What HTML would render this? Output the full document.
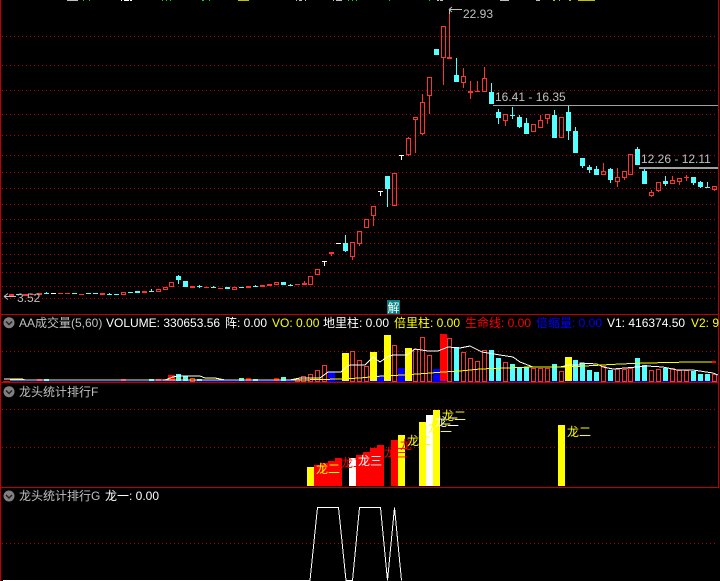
<!DOCTYPE html>
<html><head><meta charset="utf-8"><style>
html,body{margin:0;padding:0;background:#000;width:720px;height:581px;overflow:hidden}
svg{display:block}
text{font-family:"Liberation Sans","Noto Sans CJK SC",sans-serif;font-size:12px;white-space:pre}
</style></head><body>
<svg width="720" height="581" viewBox="0 0 720 581" xmlns="http://www.w3.org/2000/svg" shape-rendering="crispEdges">
<rect width="720" height="581" fill="#000"/>
<!-- top clipped text -->
<path fill="#c0c0c0" d="M67 0h11v1H67zM296 0h1v1h-1zM299 0h3v1h-3zM305 0h1v1h-1zM333 0h1v1h-1zM336 0h6v1h-6zM437 0h2v1h-2zM440 0h3v1h-3zM500 0h9v1h-9zM536 0h4v1h-4z"/>
<path fill="#fff" d="M121 0h1v1h-1zM124 0h5v1h-5zM130 0h2v1h-2z"/>
<path fill="#00e000" d="M83 0h1v1h-1zM89 0h1v1h-1zM162 0h1v1h-1zM166 0h1v1h-1zM170 0h1v1h-1zM202 0h2v1h-2zM209 0h1v1h-1zM348 0h1v1h-1zM352 0h1v1h-1zM356 0h1v1h-1zM389 0h1v1h-1zM429 0h1v1h-1z"/>
<path fill="#c0c000" d="M238 0h11v1h-11zM553 0h2v1h-2zM559 0h1v1h-1zM569 0h2v1h-2zM578 0h17v1h-17z"/>
<!-- grid -->
<g stroke="#b00000" stroke-width="1" stroke-dasharray="1 3" fill="none">
<path d="M2 36.500H718M2 65.500H718M2 90.500H718M2 114.500H718M2 135.500H718M2 155.500H718M2 172.500H718M2 188.500H718M2 204.500H718M2 219.500H718M2 232.500H718M2 243.500H718M2 254.500H718M2 263.500H718M2 272.500H718M2 286.500H718M2 298.500H718M2 351.500H718M2 409.500H718M2 447.500H718M2 543.500H718"/>
</g>
<!-- frame -->
<path fill="#c00000" d="M0 0h1v581H0zM718 0h1v488h-1zM1 314h718v1H1zM1 382h718v1H1zM1 487h718v1H1z"/>
<!-- level lines -->
<path fill="#a0a0a0" d="M493 105h225v1H493zM639 167h79v2H639z"/>
<!-- candle wicks red -->
<path fill="none" stroke="#ff3232" d="M304.500 281V285M331.500 252V256M449.500 10V59M470.500 81V99M477.500 81V92M686.500 175V181M352.500 256V260M359.500 244V246M373.500 215V226M408.500 137V138M408.500 155V156M415.500 120V153M422.500 94V102M422.500 134V135M429.500 96V114M443.500 58V85M463.500 68V76M463.500 83V88M484.500 67V78M505.500 121V126M540.500 115V120M547.500 119V124M603.500 163V171M617.500 168V177M617.500 182V187M624.500 178V180M651.500 190V192M651.500 196V197M658.500 191V192M672.500 176V180M679.500 182V185M714.500 190V191"/>
<!-- candle bodies red filled -->
<path fill="#ff3232" d="M9 294h5v2H9zM23 294h5v2h-5zM30 294h5v1h-5zM37 293h5v2h-5zM58 293h5v1h-5zM65 293h5v1h-5zM79 294h5v1h-5zM100 293h5v2h-5zM142 291h5v2h-5zM190 286h5v2h-5zM204 287h5v1h-5zM218 288h5v1h-5zM246 286h5v2h-5zM260 285h5v2h-5zM267 284h5v2h-5zM295 284h5v1h-5zM302 283h5v2h-5zM329 252h5v2h-5zM447 57h5v2h-5zM468 91h5v2h-5zM475 91h5v1h-5zM684 177h5v1h-5z"/>
<!-- candle bodies red hollow -->
<path fill="none" stroke="#ff3232" d="M121.500 292.500h4v2h-4zM156.500 289.500h4v2h-4zM163.500 287.500h4v2h-4zM169.500 282.500h4v4h-4zM232.500 287.500h4v2h-4zM274.500 282.500h4v2h-4zM308.500 276.500h4v8h-4zM315.500 269.500h4v5h-4zM350.500 242.500h4v14h-4zM357.500 231.500h4v12h-4zM364.500 219.500h4v8h-4zM371.500 206.500h4v9h-4zM392.500 173.500h4v32h-4zM406.500 138.500h4v16h-4zM413.500 117.500h4v2h-4zM420.500 102.500h4v31h-4zM427.500 77.500h4v18h-4zM441.500 26.500h4v31h-4zM461.500 76.500h4v6h-4zM482.500 78.500h4v13h-4zM503.500 114.500h4v6h-4zM531.500 124.500h4v7h-4zM538.500 120.500h4v7h-4zM545.500 114.500h4v4h-4zM559.500 117.500h4v20h-4zM601.500 171.500h4v3h-4zM615.500 177.500h4v4h-4zM622.500 171.500h4v6h-4zM628.500 154.500h4v20h-4zM649.500 192.500h4v3h-4zM656.500 182.500h4v8h-4zM670.500 180.500h4v3h-4zM677.500 178.500h4v3h-4zM712.500 186.500h4v3h-4z"/>
<!-- candle wicks cyan -->
<path fill="none" stroke="#54ffff" d="M46.500 292V294M109.500 293V295M151.500 289V292M178.500 275V284M199.500 285V288M213.500 286V288M255.500 285V287M290.500 284V286M345.500 235V252M387.500 189V207M456.500 58V75M491.500 83V92M498.500 109V124M512.500 107V119M519.500 115V128M526.500 118V123M554.500 110V115M568.500 106V140M575.500 127V131M582.500 166V168M589.500 165V173M596.500 166V169M610.500 168V183M637.500 147V149M644.500 169V171M665.500 176V186M693.500 183V185M700.500 181V188M707.500 182V188"/>
<!-- candle bodies cyan -->
<path fill="#54ffff" d="M16 294h5v1h-5zM44 293h5v1h-5zM72 293h5v1h-5zM86 293h5v1h-5zM93 293h5v1h-5zM107 294h5v1h-5zM114 294h5v1h-5zM128 292h5v1h-5zM135 291h5v2h-5zM149 291h5v1h-5zM176 276h5v4h-5zM183 281h5v6h-5zM197 286h5v1h-5zM211 287h5v1h-5zM225 287h5v2h-5zM239 287h5v1h-5zM253 286h5v1h-5zM281 282h5v3h-5zM288 285h5v1h-5zM343 243h5v8h-5zM385 176h5v13h-5zM434 49h5v6h-5zM454 75h5v7h-5zM489 92h5v12h-5zM496 112h5v6h-5zM510 115h5v1h-5zM517 117h5v10h-5zM524 123h5v11h-5zM552 115h5v23h-5zM566 112h5v19h-5zM573 131h5v22h-5zM580 158h5v8h-5zM587 167h5v3h-5zM594 169h5v6h-5zM608 169h5v11h-5zM635 149h5v16h-5zM642 171h5v13h-5zM663 181h5v3h-5zM691 177h5v6h-5zM698 182h5v5h-5zM705 187h5v1h-5z"/>
<!-- white dashes / T -->
<path fill="#fff" d="M51 293h5v1h-5zM336 243h5v1h-5zM322 261h5v1h-5zM324 261h1v5h-1zM378 191h5v1h-5zM380 191h1v5h-1zM399 155h5v1h-5zM401 155h1v5h-1z"/>
<!-- price labels -->
<path fill="none" stroke="#c0c0c0" shape-rendering="auto" d="M449 9.500H462M449.500 9V14M449 9.500L452 7M449 9.500L452 12" stroke-width="1"/>
<text x="463" y="18" fill="#c0c0c0">22.93</text>
<text x="495" y="101" fill="#c0c0c0">16.41 - 16.35</text>
<text x="641" y="163" fill="#c0c0c0">12.26 - 12.11</text>
<path fill="none" stroke="#c0c0c0" d="M4 296.500H16M4 296.500L8 293.500M4 296.500L8 299.500" shape-rendering="auto"/>
<text x="17" y="302" fill="#c0c0c0">3.52</text>
<rect x="387" y="300" width="13" height="14" fill="#008080"/>
<text x="387.500" y="312" fill="#fff">解</text>
<!-- volume: base -->
<path fill="#0000ff" d="M5 381h713v1H5zM285 379h16v2h-16zM168 380h130v1H168z"/>
<path fill="#ff0000" d="M3 381h7v1H3z"/>
<!-- volume bars filled -->
<path fill="#ffff00" d="M342 353h7v28h-7zM370 352h7v29h-7zM384 335h7v46h-7zM405 348h7v33h-7zM565 357h7v24h-7z"/>
<path fill="#0000ff" d="M328 372h7v9h-7zM377 375h7v6h-7zM398 368h7v13h-7zM433 369h7v12h-7z"/>
<path fill="#ff0000" d="M440 334h7v47h-7zM168 375h7v6h-7zM37 379h5v2h-5zM121 379h5v2h-5zM156 379h5v2h-5zM163 379h5v2h-5zM246 378h5v3h-5zM274 378h5v3h-5z"/>
<path fill="#54ffff" d="M176 374h5v7h-5zM183 376h5v5h-5zM44 379h5v2h-5zM149 379h5v2h-5zM197 379h5v2h-5zM239 378h5v3h-5zM253 379h5v2h-5zM281 377h5v4h-5zM454 347h5v34h-5zM489 350h5v31h-5zM496 358h5v23h-5zM510 364h5v17h-5zM517 367h5v14h-5zM524 367h5v14h-5zM552 364h5v17h-5zM573 360h5v21h-5zM580 363h5v18h-5zM587 370h5v11h-5zM594 372h5v9h-5zM608 370h5v11h-5zM635 358h5v23h-5zM642 365h5v16h-5zM663 368h5v13h-5zM691 371h5v10h-5zM698 374h5v7h-5zM705 374h5v7h-5z"/>
<!-- volume bars hollow -->
<path fill="none" stroke="#ff3232" d="M190.500 378.500h4v3h-4zM295.500 379.500h4v2h-4zM301.500 376.500h4v5h-4zM308.500 374.500h4v7h-4zM315.500 370.500h4v11h-4zM322.500 365.500h4v16h-4zM350.500 351.500h4v30h-4zM357.500 360.500h4v21h-4zM364.500 366.500h4v15h-4zM392.500 345.500h4v36h-4zM413.500 349.500h4v32h-4zM420.500 337.500h4v44h-4zM427.500 355.500h4v26h-4zM447.500 338.500h4v43h-4zM461.500 352.500h4v29h-4zM468.500 358.500h4v23h-4zM475.500 361.500h4v20h-4zM482.500 350.500h4v31h-4zM503.500 362.500h4v19h-4zM531.500 368.500h4v13h-4zM538.500 368.500h4v13h-4zM545.500 368.500h4v13h-4zM559.500 371.500h4v10h-4zM601.500 366.500h4v15h-4zM615.500 369.500h4v12h-4zM622.500 369.500h4v12h-4zM628.500 368.500h4v13h-4zM649.500 370.500h4v11h-4zM656.500 369.500h4v12h-4zM670.500 368.500h4v13h-4zM677.500 370.500h4v11h-4zM684.500 370.500h4v11h-4zM712.500 374.500h4v7h-4z"/>
<!-- volume lines -->
<polyline fill="none" stroke="#fff" points="4,379 22,379 25,380 165,380 173,377 178,376 200,376 205,378 215,378 225,380 290,380 300,378 320,378 328,372 341,372 345,368 350,365 365,365 370,360 373,357 380,362 387,357 393,355 407,355 415,349 428,351 438,351 448,347 460,348 470,346 482,352 500,355 513,357 520,362 533,367 560,367 570,365 580,365 580,363 597,364 603,367 613,369 637,367 647,366 663,367 677,370 693,370 713,373 718,375"/>
<polyline fill="none" stroke="#ffff00" points="10,380 300,380 340,379 360,378 370,377 383,376 403,375 418,374 443,372 460,371 480,369 507,368 530,367 567,367 620,364 647,363 690,362 712,362"/>
<rect x="712" y="361" width="4" height="2" fill="#ff0000"/>
<!-- panel header icons -->
<g shape-rendering="auto">
<circle cx="9" cy="322.700" r="5.500" fill="#808080"/><path d="M6 321.500l3 3 3-3" fill="none" stroke="#222" stroke-width="1.500"/>
<circle cx="9" cy="391.700" r="5.500" fill="#808080"/><path d="M6 390.500l3 3 3-3" fill="none" stroke="#222" stroke-width="1.500"/>
<circle cx="9" cy="496" r="5.500" fill="#808080"/><path d="M6 495l3 3 3-3" fill="none" stroke="#222" stroke-width="1.500"/>
</g>
<!-- header volume -->
<text x="19" y="327" fill="#c0c0c0">AA成交量(5,60)</text>
<text x="106" y="327" fill="#fff">VOLUME: 330653.56</text>
<text x="225" y="327" fill="#fff">阵: 0.00</text>
<text x="272" y="327" fill="#ffff00">VO: 0.00</text>
<text x="323" y="327" fill="#fff">地里柱: 0.00</text>
<text x="394" y="327" fill="#ffff00">倍里柱: 0.00</text>
<text x="465" y="327" fill="#ff0000">生命线: 0.00</text>
<text x="536" y="327" fill="#0000ff">倍缩量: 0.00</text>
<text x="607" y="327" fill="#fff">V1: 416374.50</text>
<text x="691" y="327" fill="#ffff00">V2: 9</text>
<!-- panel F -->
<text x="19" y="396" fill="#c0c0c0">龙头统计排行F</text>
<path fill="#ffff00" d="M307 467h7v19h-7zM398 435h7v51h-7zM419 422h7v64h-7zM433 410h7v76h-7zM558 425h7v61h-7z"/>
<path fill="#ff0000" d="M314 465h7v21h-7zM321 463h7v23h-7zM328 461h7v25h-7zM335 458h7v28h-7zM356 455h7v31h-7zM363 452h7v34h-7zM370 448h7v38h-7zM377 445h7v41h-7zM391 440h7v46h-7z"/>
<path fill="#fff" d="M349 458h7v28h-7zM426 415h7v71h-7z"/>
<text x="316" y="473" fill="#ffff00">龙二</text>
<text x="341" y="467" fill="#ff0000">龙二</text>
<text x="358" y="465" fill="#fff">龙三</text>
<text x="384" y="457" fill="#ff0000">龙三</text>
<text x="400" y="449" fill="#ff0000">龙</text>
<text x="407" y="445" fill="#ffff00">龙二</text>
<text x="428" y="432" fill="#ffff00">龙二</text>
<text x="435" y="426" fill="#fff">龙二</text>
<text x="442" y="420" fill="#ffff00">龙二</text>
<text x="567" y="436" fill="#ffff00">龙二</text>
<!-- panel G -->
<text x="19" y="500" fill="#c0c0c0">龙头统计排行G</text>
<text x="105" y="500" fill="#fff">龙一: 0.00</text>
<polyline fill="none" stroke="#fff" points="3,580.500 310,580.500 317.500,507.500 338.500,507.500 346,580.500 352.500,580.500 359.500,507.500 380.500,507.500 387.500,580.500 394.500,507.500 401.500,580.500"/>
</svg>
</body></html>
